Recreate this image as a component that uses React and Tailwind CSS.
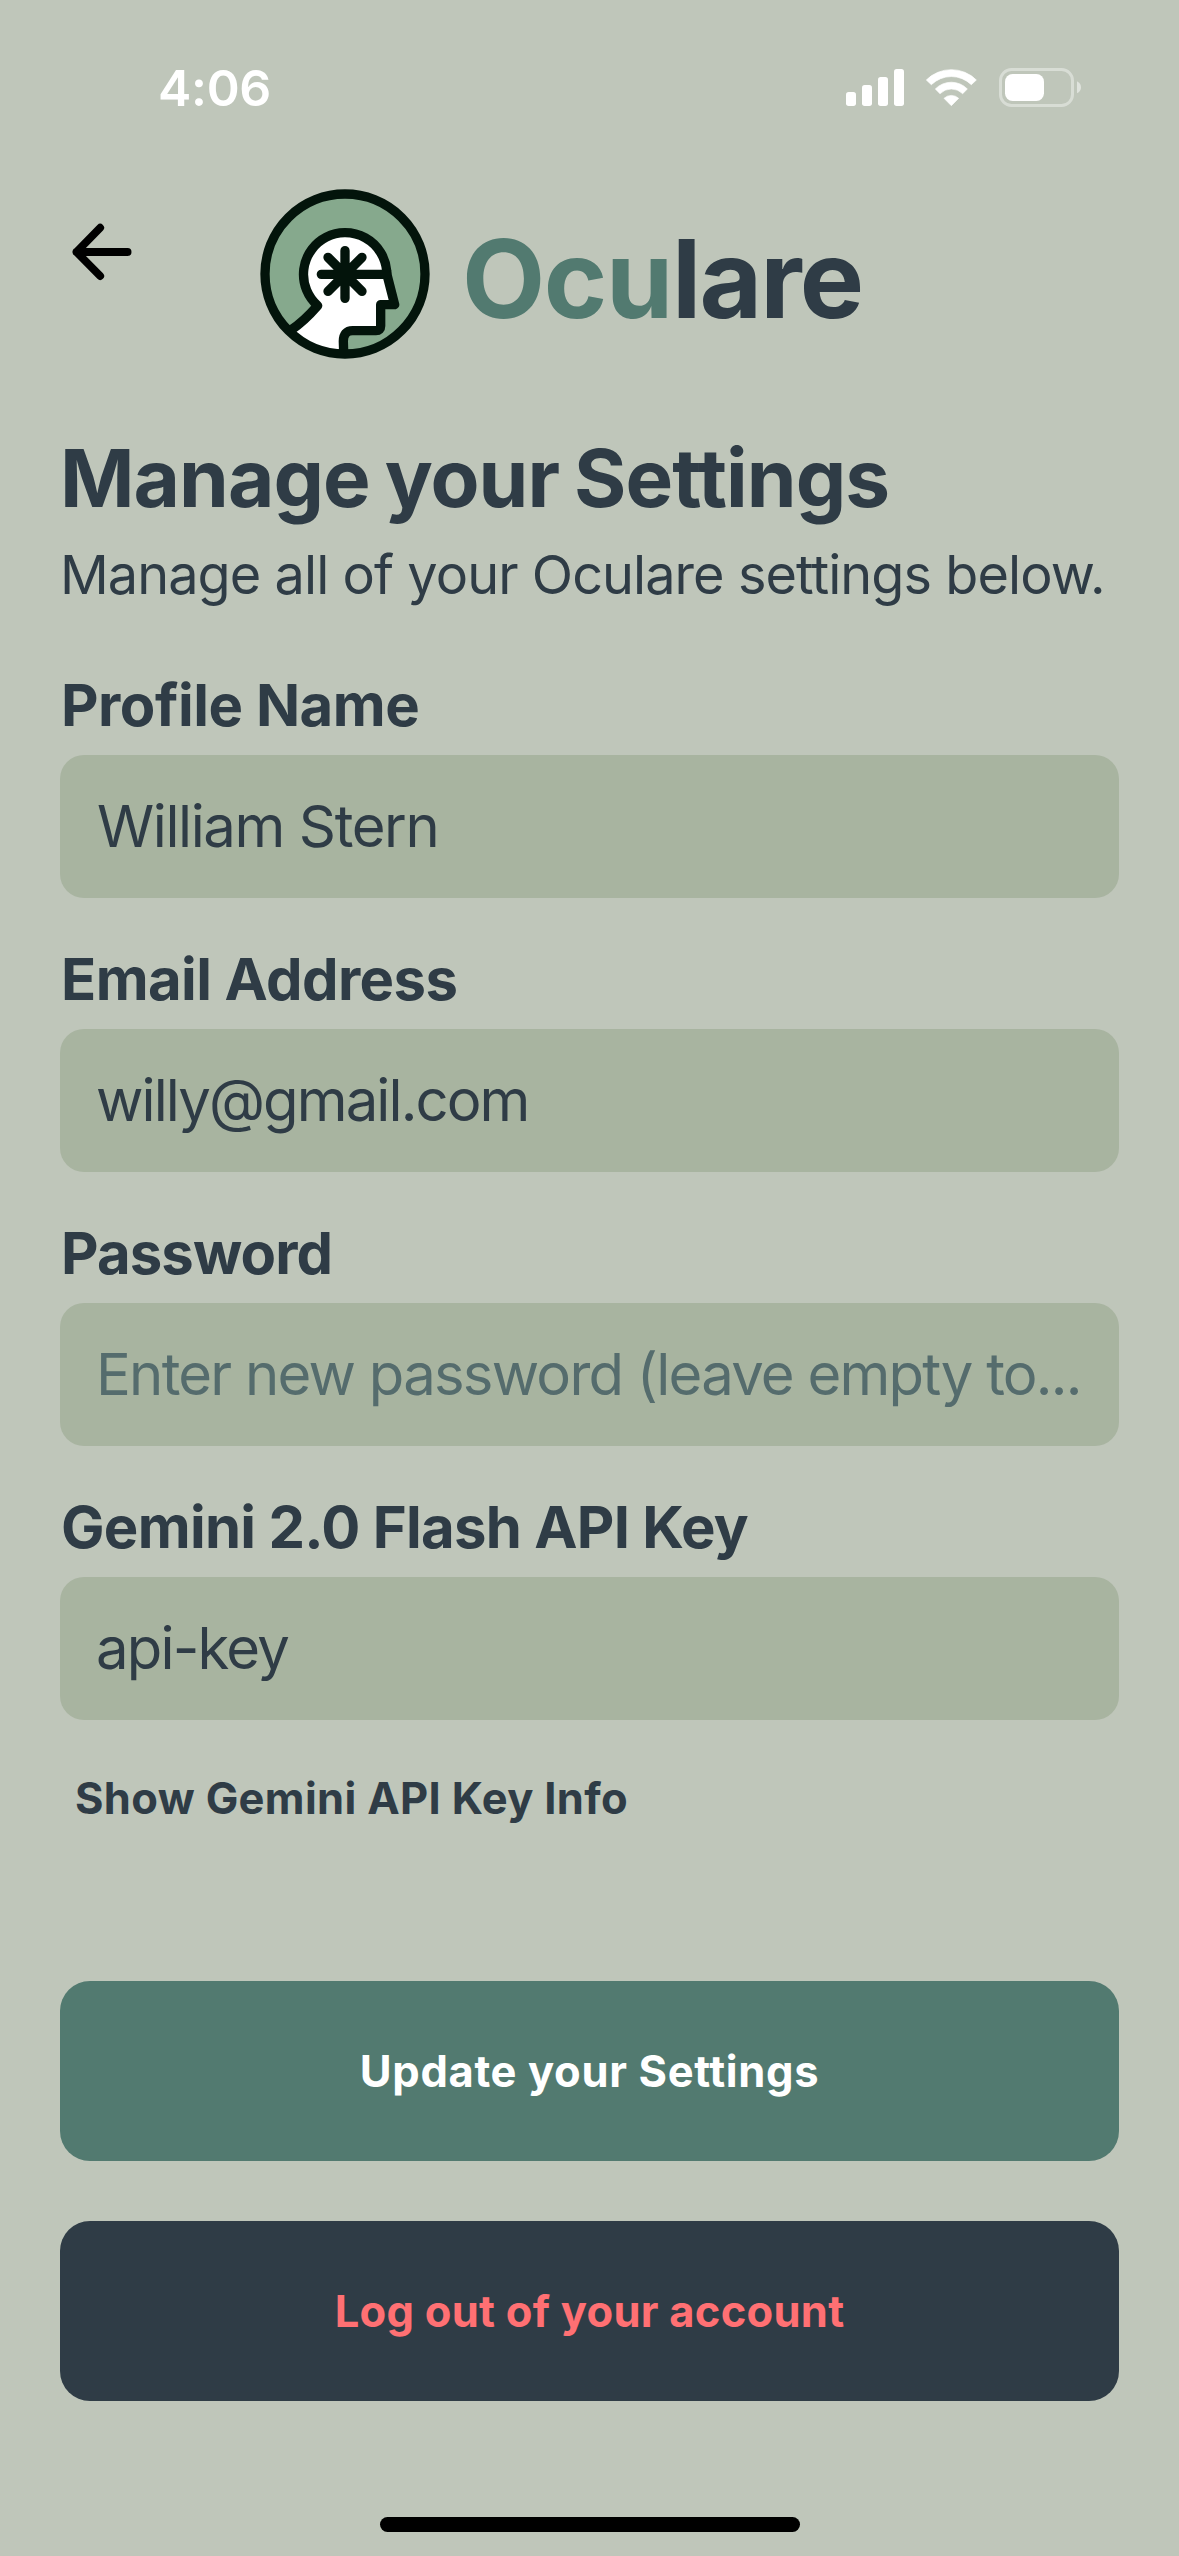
const FIELDS = [
  { label: "Profile Name", value: "William Stern", labelClass: "tracking-[-0.47px]", inputClass: "pl-[37px] tracking-[-1.4px] text-[#2f3c46]" },
  { label: "Email Address", value: "willy@gmail.com", labelClass: "tracking-[-0.58px]", inputClass: "pl-[36px] tracking-[-1.9px] text-[#2f3c46]" },
  { label: "Password", value: "Enter new password (leave empty to...", labelClass: "tracking-[-0.9px]", inputClass: "pl-[36px] tracking-[-1.75px] text-[#556c6d]" },
  { label: "Gemini 2.0 Flash API Key", value: "api-key", labelClass: "tracking-[-0.7px]", inputClass: "pl-[36px] tracking-[-1.8px] text-[#2f3c46]" },
];

function StatusIcons() {
  return (
    <svg className="h-[40px] w-[236px]" viewBox="78 54 708 120" fill="#fff">
      <rect x="78" y="126" width="30" height="42" rx="8" />
      <rect x="126" y="105" width="30" height="63" rx="8" />
      <rect x="174" y="81" width="30" height="87" rx="8" />
      <rect x="222" y="57" width="30" height="111" rx="8" />
      <g stroke="#fff" strokeWidth="2" strokeLinejoin="round">
        <path d="M319 90A106 106 0 0 1 469 90L454 104A86 86 0 0 0 334 104Z" />
        <path d="M346 117A67 67 0 0 1 442 117L428 131A48 48 0 0 0 360 131Z" />
        <path d="M372 145A32 32 0 0 1 416 145L394 167Z" />
      </g>
      <rect x="541.5" y="58.500" width="216" height="108" rx="33" fill="none" stroke="#fff" strokeOpacity=".4" strokeWidth="9" />
      <rect x="555" y="72" width="117" height="81" rx="23" />
      <path d="M771 94Q783 100 783 112T771 130Z" fillOpacity=".5" />
    </svg>
  );
}

function Logo() {
  return (
    <svg className="size-[170px] shrink-0" viewBox="59 57 510 510" fill="none" stroke="#03140b" strokeWidth="28" strokeLinecap="round" strokeLinejoin="round">
      <circle cx="314" cy="312" r="240" fill="#86a98d" stroke="none" />
      <path
        d="M152 480C186 458 212 430 232 407A125 125 0 1 1 439 302L441 318L463 404H421V468Q421 482 407 482H337Q309 482 309 514L310 552A240 240 0 0 1 152 480Z"
        fill="#fff"
        stroke="none"
      />
      <path d="M152 480C186 458 212 430 232 407A125 125 0 1 1 439 302L441 318L463 404H421V468Q421 482 407 482H337Q309 482 309 514L310 546" />
      <path d="M314 242V385M243 313H438M263 262L365 364M365 262L263 364" />
      <circle cx="314" cy="312" r="240" />
    </svg>
  );
}

export default function App() {
  return (
    <div className="flex h-[2556px] w-[1179px] flex-col overflow-hidden bg-[#bfc6ba] font-[Inter,sans-serif] whitespace-nowrap text-[#2f3c46]">
      <div className="flex h-[176px] items-center justify-between pr-[97px] pl-[158px]">
        <span className="text-[50px] leading-[60px] font-semibold tracking-[-0.3px] text-white">4:06</span>
        <StatusIcons />
      </div>

      <header className="flex h-[196px] items-center pl-[72px]">
        <svg className="mt-[46px] size-[60px] self-start" viewBox="0 0 60 60" fill="none" stroke="#000" strokeWidth="7.8" strokeLinecap="round" strokeLinejoin="round">
          <path d="M55.600 30H4.500M28.200 5.700L4.500 30L28.200 54" />
        </svg>
        <div className="ml-[128px]">
          <Logo />
        </div>
        <h1 className="mt-[9px] ml-[32px] flex text-[108px] leading-[130px] font-bold">
          <span className="w-[210px] tracking-[-1.38px] text-[#527a70]">Ocu</span>
          <span className="tracking-[-1.87px]">lare</span>
        </h1>
      </header>

      <main className="flex flex-col px-[60px]">
        <h2 className="mt-[57px] text-[80px] leading-[98px] font-bold tracking-[-0.95px] [word-spacing:-3px]">Manage your Settings</h2>
        <p className="mt-[16px] text-[54px] leading-[64px] tracking-[-0.93px]">Manage all of your Oculare settings below.</p>

        <div className="mt-[63px] flex flex-col gap-[46px]">
          {FIELDS.map((f) => (
            <div key={f.label} className="flex flex-col gap-[15px]">
              <div className={`pl-px text-[58px] leading-[70px] font-bold ${f.labelClass}`}>{f.label}</div>
              <div className={`flex h-[143px] items-center rounded-3xl bg-[#a8b4a0] pb-px text-[58px] ${f.inputClass}`}>{f.value}</div>
            </div>
          ))}
        </div>

        <div className="mt-[51px] pl-[15px] text-[43.5px] leading-[54px] font-bold tracking-[0.34px]">Show Gemini API Key Info</div>

        <div className="mt-[156px] flex flex-col gap-[60px] text-[43.5px] font-bold">
          <button className="h-[180px] rounded-[30px] bg-[#527a70] pt-px tracking-[0.65px] text-white">Update your Settings</button>
          <button className="h-[180px] rounded-[30px] bg-[#2f3c46] pt-px tracking-[0.26px] text-[#ff7073]">Log out of your account</button>
        </div>
      </main>

      <div className="mt-[116px] h-[15px] w-[420px] self-center rounded-full bg-black" />
    </div>
  );
}
